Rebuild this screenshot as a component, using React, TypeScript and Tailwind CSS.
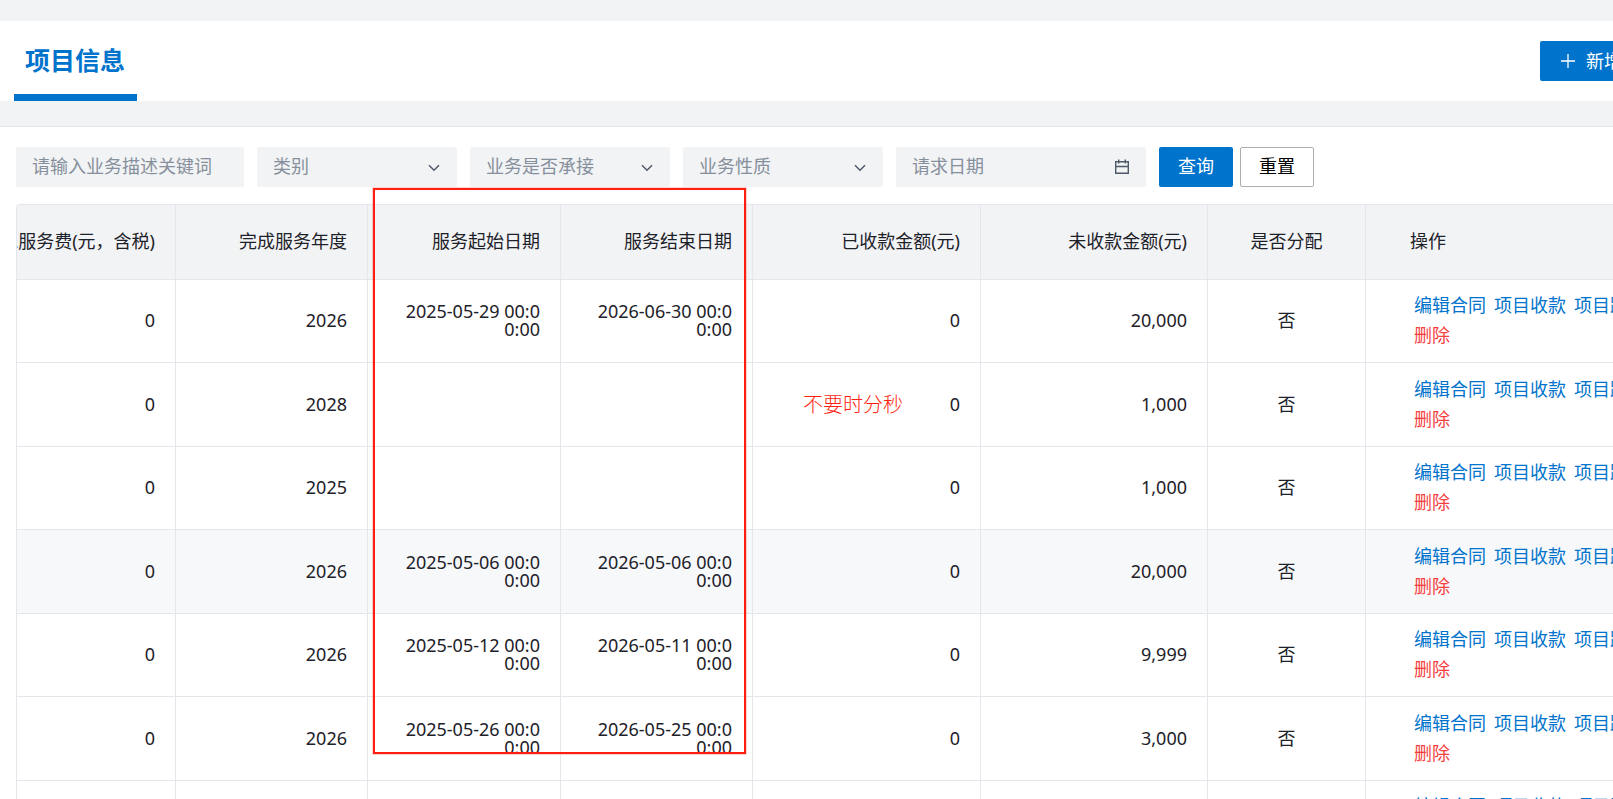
import { useState } from 'react';

interface Project {
  id: number;
  fee: string;
  year: string;
  start: string;
  end: string;
  received: string;
  outstanding: string;
  assigned: string;
}

const projects: Project[] = [
  { id: 1, fee: '0', year: '2026', start: '2025-05-29 00:00:00', end: '2026-06-30 00:00:00', received: '0', outstanding: '20,000', assigned: '否' },
  { id: 2, fee: '0', year: '2028', start: '', end: '', received: '0', outstanding: '1,000', assigned: '否' },
  { id: 3, fee: '0', year: '2025', start: '', end: '', received: '0', outstanding: '1,000', assigned: '否' },
  { id: 4, fee: '0', year: '2026', start: '2025-05-06 00:00:00', end: '2026-05-06 00:00:00', received: '0', outstanding: '20,000', assigned: '否' },
  { id: 5, fee: '0', year: '2026', start: '2025-05-12 00:00:00', end: '2026-05-11 00:00:00', received: '0', outstanding: '9,999', assigned: '否' },
  { id: 6, fee: '0', year: '2026', start: '2025-05-26 00:00:00', end: '2026-05-25 00:00:00', received: '0', outstanding: '3,000', assigned: '否' },
  { id: 7, fee: '0', year: '2026', start: '', end: '', received: '0', outstanding: '3,000', assigned: '否' },
];

const columns = [
  { label: '总服务费(元，含税)', width: 'w-[159px]', align: 'justify-end px-5' },
  { label: '完成服务年度', width: 'w-[192px]', align: 'justify-end px-5' },
  { label: '服务起始日期', width: 'w-[193px]', align: 'justify-end px-5' },
  { label: '服务结束日期', width: 'w-[192px]', align: 'justify-end px-5' },
  { label: '已收款金额(元)', width: 'w-[228px]', align: 'justify-end px-5' },
  { label: '未收款金额(元)', width: 'w-[227px]', align: 'justify-end px-5' },
  { label: '是否分配', width: 'w-[158px]', align: 'justify-center px-5' },
  { label: '操作', width: '', align: 'justify-start pl-11' },
];

const cell = 'border-r border-b border-[#e5e6eb] pt-0 pb-[2px]';

function PlusIcon() {
  return (
    <svg className="w-[14px] h-[14px]" viewBox="0 0 14 14" fill="none" stroke="currentColor" strokeWidth="1.3">
      <path d="M7 0v14M0 7h14" />
    </svg>
  );
}

function ChevronIcon() {
  return (
    <svg
      className="absolute right-[17px] top-[17px] w-3 h-2 text-[#4e5969] pointer-events-none"
      viewBox="0 0 12 8"
      fill="none"
      stroke="currentColor"
      strokeWidth="1.5"
    >
      <path d="M1 1.2l5 5 5-5" />
    </svg>
  );
}

function CalendarIcon() {
  return (
    <svg
      className="absolute right-4 top-3 w-4 h-4 text-[#4e5969] pointer-events-none"
      viewBox="0 0 16 16"
      fill="none"
      stroke="currentColor"
      strokeWidth="1.4"
    >
      <path d="M1.7 2.7h12.6v11.6H1.7zM1.7 7.5h12.6M4.7 0.5v4M11.3 0.5v4" />
    </svg>
  );
}

function FilterSelect({ label }: { label: string }) {
  return (
    <div className="relative w-[200px] h-10 shrink-0">
      <select
        aria-label={label}
        className="w-full h-full px-4 pb-[2px] appearance-none rounded-[2px] bg-[#f2f3f5] text-[#86909c] outline-none"
      >
        <option>{label}</option>
      </select>
      <ChevronIcon />
    </div>
  );
}

export default function App() {
  const [keyword, setKeyword] = useState('');
  const [date, setDate] = useState('');

  return (
    <div className="relative h-screen overflow-hidden bg-[#f2f3f5] pt-[21px] text-[18px] leading-[18px] text-[#1d2129] font-['Noto_Sans','Noto_Sans_CJK_SC',sans-serif]">
      <div className="-mr-11">
        <header className="flex items-center justify-between h-20 pl-[14px] pr-[14px] bg-white">
          <div className="flex items-center h-full pl-[11px] pr-3 border-b-[7px] border-[#0073cc]">
            <h1 className="pt-1 text-[25px] leading-8 font-bold text-[#0073cc]">项目信息</h1>
          </div>
          <button className="flex items-center gap-[11px] h-10 px-[21px] rounded-[2px] bg-[#0073cc] text-white">
            <PlusIcon />
            新增
          </button>
        </header>

        <main className="mt-[25px] pt-5 pl-4 bg-white border-t border-[#e5e6eb]">
          <form className="flex gap-[13px]" onSubmit={(e) => e.preventDefault()}>
            <input
              type="text"
              aria-label="业务描述关键词"
              placeholder="请输入业务描述关键词"
              value={keyword}
              onChange={(e) => setKeyword(e.target.value)}
              className="w-[228px] h-10 px-4 pb-[2px] shrink-0 rounded-[2px] bg-[#f2f3f5] placeholder:text-[#86909c] outline-none"
            />
            <FilterSelect label="类别" />
            <FilterSelect label="业务是否承接" />
            <FilterSelect label="业务性质" />
            <div className="relative w-[250px] h-10 shrink-0">
              <input
                type="text"
                aria-label="请求日期"
                placeholder="请求日期"
                value={date}
                onChange={(e) => setDate(e.target.value)}
                className="w-full h-full px-4 pb-[2px] rounded-[2px] bg-[#f2f3f5] placeholder:text-[#86909c] outline-none"
              />
              <CalendarIcon />
            </div>
            <div className="flex gap-[7px]">
              <button type="submit" className="w-[74px] h-10 pb-[2px] rounded-[2px] bg-[#0073cc] text-white">
                查询
              </button>
              <button type="reset" className="w-[74px] h-10 pb-[2px] rounded-[2px] border border-[#adadad] bg-white text-black">
                重置
              </button>
            </div>
          </form>

          <div className="mt-[17px] overflow-hidden rounded-tl-[4px] border-t border-l border-[#e5e6eb]">
            <table className="w-full table-fixed border-separate border-spacing-0">
              <thead>
                <tr className="h-[75px] bg-[#f2f3f5]">
                  {columns.map((col) => (
                    <th key={col.label} className={`${cell} ${col.width} px-0 font-normal`}>
                      <div className={`flex overflow-hidden whitespace-nowrap leading-6 ${col.align}`}>{col.label}</div>
                    </th>
                  ))}
                </tr>
              </thead>
              <tbody>
                {projects.map((p) => (
                  <tr key={p.id} className={`h-[83px] even:h-[84px] text-right ${p.id === 4 ? 'bg-[#f7f8fa]' : 'bg-white'}`}>
                    <td className={`${cell} px-5`}>{p.fee}</td>
                    <td className={`${cell} px-5`}>{p.year}</td>
                    <td className={`${cell} pl-[30px] pr-5 break-all`}>{p.start}</td>
                    <td className={`${cell} pl-[30px] pr-5 break-all`}>{p.end}</td>
                    <td className={`${cell} px-5`}>{p.received}</td>
                    <td className={`${cell} px-5`}>{p.outstanding}</td>
                    <td className={`${cell} px-5 text-center`}>{p.assigned}</td>
                    <td className={`${cell} pl-12`}>
                      <div className="flex flex-wrap gap-x-2 leading-[30px] text-[#0073cc]">
                        <button>编辑合同</button>
                        <button>项目收款</button>
                        <button>项目跟进</button>
                        <button className="text-[#f53f3f]">删除</button>
                      </div>
                    </td>
                  </tr>
                ))}
              </tbody>
            </table>
          </div>
        </main>
      </div>

      {/* review mark-up drawn over the date columns */}
      <div className="absolute left-[373px] top-[188px] w-[373px] h-[566px] border-2 border-[#ff1f10] shadow-[0_0_0_1px_#ff1f1033] pointer-events-none" />
      <p className="absolute left-[803px] top-[395px] text-[20px] leading-5 font-light text-[#ff1f10]">不要时分秒</p>
    </div>
  );
}
